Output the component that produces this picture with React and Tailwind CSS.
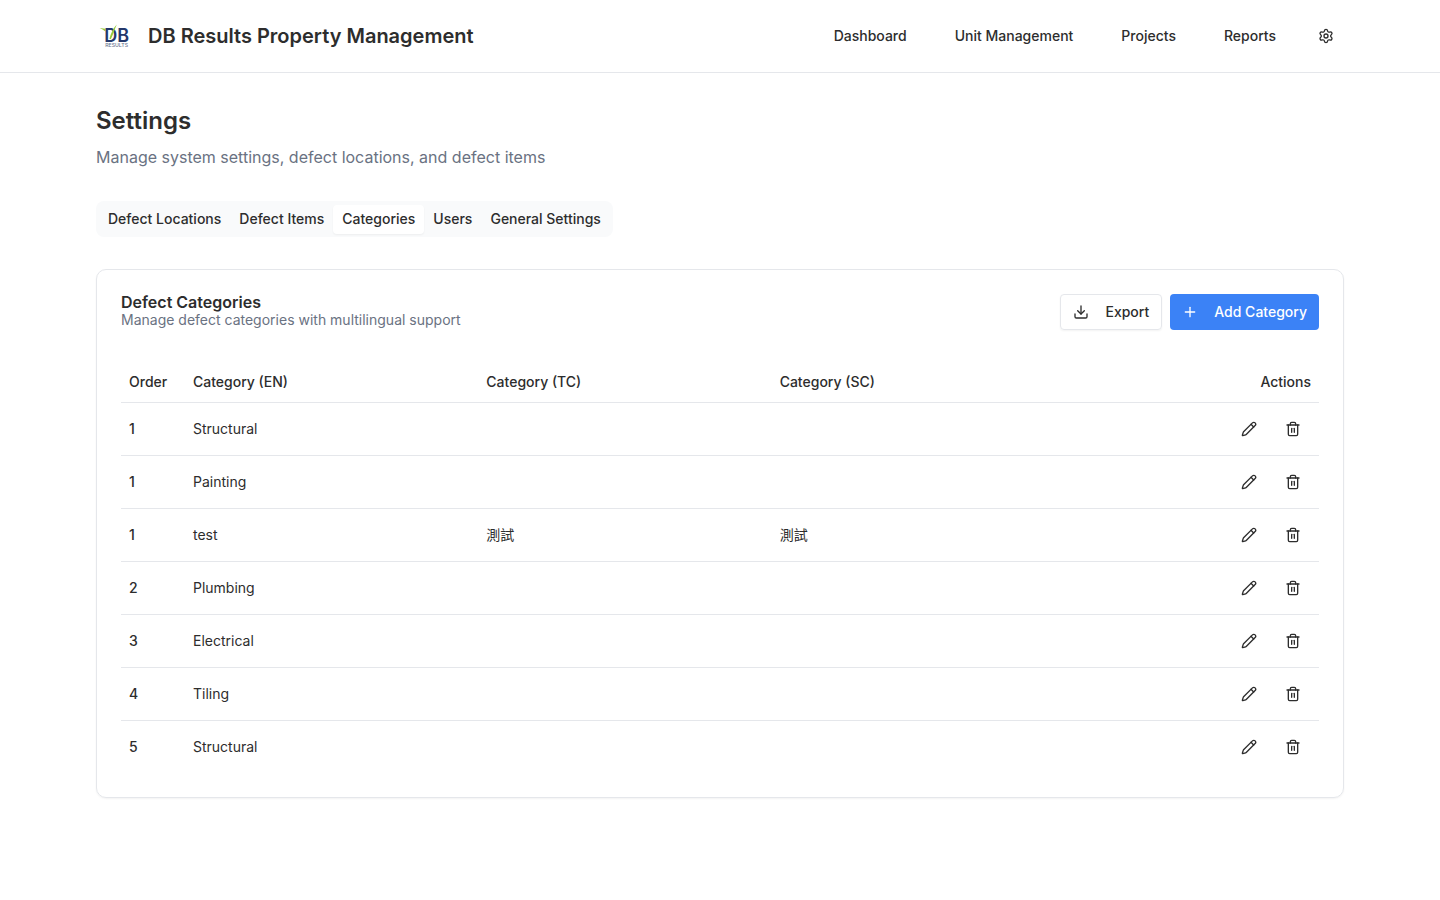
import { Download, Pencil, Plus, Settings, Trash2 } from "lucide-react";

const navLinks = ["Dashboard", "Unit Management", "Projects", "Reports"];

const tabs = ["Defect Locations", "Defect Items", "Categories", "Users", "General Settings"];

const categories = [
  { id: 1, order: 1, en: "Structural", tc: "", sc: "" },
  { id: 2, order: 1, en: "Painting", tc: "", sc: "" },
  { id: 3, order: 1, en: "test", tc: "測試", sc: "測試" },
  { id: 4, order: 2, en: "Plumbing", tc: "", sc: "" },
  { id: 5, order: 3, en: "Electrical", tc: "", sc: "" },
  { id: 6, order: 4, en: "Tiling", tc: "", sc: "" },
  { id: 7, order: 5, en: "Structural", tc: "", sc: "" },
];

function Logo() {
  return (
    <svg viewBox="0 0 40 40" className="size-10" role="img" aria-label="DB Results">
      <path d="M3.6 12 L9.4 12.8 V15.4 C7.6 14 5.8 12.9 3.6 12Z" fill="#9acb3c" />
      <text fontFamily="Inter, sans-serif">
        <tspan x="8.2" y="25.8" fontSize="18" fontWeight="600" fill="#24386b">
          DB
        </tspan>
        <tspan x="9.2" y="30.5" fontSize="5.2" fontWeight="500" fill="#6b7690">
          RESULTS
        </tspan>
      </text>
      <path d="M13.4 22.8 C14.8 17 17.2 12 20.8 8.4 C18.8 13 17 18.6 14.8 23.2 Z" fill="#9acb3c" />
    </svg>
  );
}

function Header() {
  return (
    <header className="border-b border-gray-200">
      <div className="mx-auto flex max-w-7xl items-center justify-between px-4 py-4">
        <div className="flex items-center gap-3">
          <Logo />
          <span className="text-xl font-semibold">DB Results Property Management</span>
        </div>
        <nav className="flex items-center gap-4">
          {navLinks.map((label) => (
            <a key={label} href="#" className="px-4 py-2 text-sm font-medium">
              {label}
            </a>
          ))}
          <button type="button" aria-label="Settings" className="flex size-9 items-center justify-center">
            <Settings className="size-4" />
          </button>
        </nav>
      </div>
    </header>
  );
}

function Tabs() {
  return (
    <div role="tablist" className="flex h-9 w-fit items-center rounded-lg bg-gray-50 p-[3px]">
      {tabs.map((label) => (
        <button
          key={label}
          type="button"
          role="tab"
          aria-selected={label === "Categories"}
          className="h-[calc(100%-1px)] rounded border border-transparent px-2 text-sm font-medium aria-selected:bg-white aria-selected:shadow-xs"
        >
          {label}
        </button>
      ))}
    </div>
  );
}

function CategoryTable() {
  return (
    <table className="w-full table-fixed text-sm">
      <thead>
        <tr className="border-b border-gray-200 text-left">
          <th className="h-10 w-16 px-2 font-medium">Order</th>
          <th className="px-2 font-medium">Category (EN)</th>
          <th className="px-2 font-medium">Category (TC)</th>
          <th className="px-2 font-medium">Category (SC)</th>
          <th className="w-[254px] px-2 text-right font-medium">Actions</th>
        </tr>
      </thead>
      <tbody>
        {categories.map((row) => (
          <tr key={row.id} className="border-b border-gray-200 last:border-0">
            <td className="p-2 font-medium">{row.order}</td>
            <td className="p-2">{row.en}</td>
            <td className="p-2">{row.tc}</td>
            <td className="p-2">{row.sc}</td>
            <td className="p-2">
              <div className="flex justify-end gap-2">
                <button
                  type="button"
                  aria-label={`Edit ${row.en}`}
                  className="flex size-9 items-center justify-center"
                >
                  <Pencil className="size-4" />
                </button>
                <button
                  type="button"
                  aria-label={`Delete ${row.en}`}
                  className="flex size-9 items-center justify-center"
                >
                  <Trash2 className="size-4" />
                </button>
              </div>
            </td>
          </tr>
        ))}
      </tbody>
    </table>
  );
}

export default function App() {
  return (
    <div className="min-h-screen bg-white font-['Inter','Noto_Sans_CJK_TC',sans-serif] text-[#2d2d2d]">
      <Header />
      <main className="mx-auto flex max-w-7xl flex-col gap-8 px-4 py-8">
        <div className="flex flex-col gap-2">
          <h1 className="text-2xl font-semibold">Settings</h1>
          <p className="text-gray-500">Manage system settings, defect locations, and defect items</p>
        </div>
        <Tabs />
        <section className="flex flex-col gap-8 rounded-[10px] border border-gray-200 p-6 shadow-xs">
          <div className="flex items-center justify-between">
            <div>
              <h2 className="leading-4 font-semibold">Defect Categories</h2>
              <p className="text-sm text-gray-500">Manage defect categories with multilingual support</p>
            </div>
            <div className="flex gap-2">
              <button
                type="button"
                className="flex h-9 items-center gap-4 rounded border border-gray-200 px-3 text-sm font-medium shadow-xs"
              >
                <Download className="size-4" />
                Export
              </button>
              <button
                type="button"
                className="flex h-9 items-center gap-4 rounded bg-[#3b82f6] px-3 text-sm font-medium text-white"
              >
                <Plus className="size-4" />
                Add Category
              </button>
            </div>
          </div>
          <CategoryTable />
        </section>
      </main>
    </div>
  );
}
